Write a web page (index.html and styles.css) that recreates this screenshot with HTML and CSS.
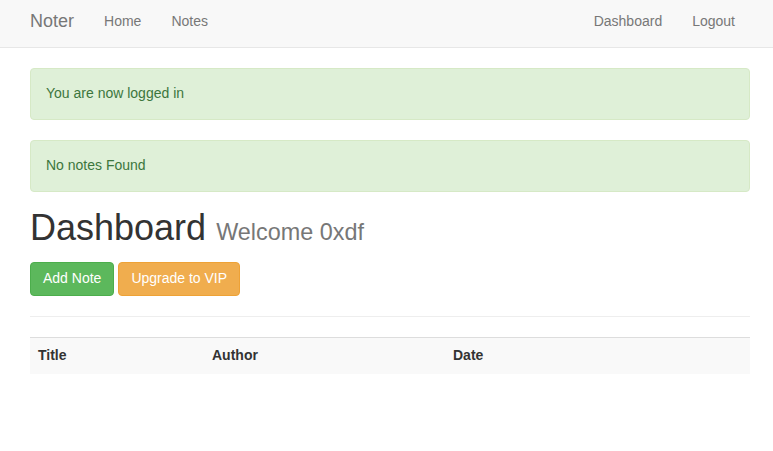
FILE: index.html
```html
<!DOCTYPE html>
<html>
<head>
<meta charset="utf-8">
<title>Noter</title>
<link rel="stylesheet" href="styles.css">
</head>
<body>
<nav class="navbar">
  <div class="nav-inner">
    <a class="brand" href="#">Noter</a>
    <ul class="nav-links">
      <li><a href="#">Home</a></li>
      <li><a href="#">Notes</a></li>
    </ul>
    <ul class="nav-links nav-right">
      <li><a href="#">Dashboard</a></li>
      <li><a href="#">Logout</a></li>
    </ul>
  </div>
</nav>
<main class="container">
  <div class="alert">You are now logged in</div>
  <div class="alert">No notes Found</div>
  <h1 class="title">Dashboard <small>Welcome 0xdf</small></h1>
  <div class="actions">
    <a class="btn btn-success" href="#">Add Note</a>
    <a class="btn btn-warning" href="#">Upgrade to VIP</a>
  </div>
  <hr class="rule">
  <table class="table">
    <tr class="head-row">
      <th class="col-title">Title</th>
      <th class="col-author">Author</th>
      <th>Date</th>
    </tr>
  </table>
</main>
</body>
</html>
```
FILE: styles.css
```css
* { box-sizing: border-box; }
html, body { margin: 0; padding: 0; }
body {
  font-family: "Liberation Sans", Arial, Helvetica, sans-serif;
  font-size: 14px;
  line-height: 20px;
  color: #333;
  background: #fff;
}
a { text-decoration: none; }

.navbar {
  height: 48px;
  background: #f8f8f8;
  border-bottom: 1px solid #e7e7e7;
}
.nav-inner {
  display: flex;
  align-items: flex-start;
  height: 47px;
  padding-left: 30px;
  padding-top: 11px;
  width: 750px;
}
.brand {
  font-size: 18px;
  line-height: 20px;
  color: #777;
  padding-right: 15px;
}
.nav-links {
  display: flex;
  list-style: none;
  margin: 0;
  padding: 0;
}
.nav-links a {
  display: block;
  padding: 0 15px;
  color: #777;
  line-height: 20px;
}
.nav-right { margin-left: auto; }

.container {
  width: 720px;
  margin-left: 30px;
  padding-top: 20px;
}
.alert {
  padding: 14px 15px 16px;
  border: 1px solid #d6e9c6;
  border-radius: 4px;
  background: #dff0d8;
  color: #3c763d;
  margin-bottom: 20px;
}
.title {
  font-size: 36px;
  font-weight: 500;
  line-height: 39.6px;
  margin: -4px 0 0;
  color: #333;
}
.title small {
  font-size: 23.4px;
  font-weight: 400;
  color: #777;
}
.actions {
  margin-top: 9px;
  display: flex;
  gap: 4px;
}
.btn {
  display: inline-block;
  padding: 5px 12px 7px;
  font-size: 14px;
  line-height: 20px;
  border: 1px solid transparent;
  border-radius: 4px;
  color: #fff;
}
.btn-success { background: #5cb85c; border-color: #4cae4c; }
.btn-warning { background: #f0ad4e; border-color: #eea236; }

.rule {
  margin: 20px 0;
  border: 0;
  border-top: 1px solid #eee;
}
.table {
  width: 100%;
  border-collapse: collapse;
  border-spacing: 0;
}
.head-row { background: #f9f9f9; }
.table th {
  text-align: left;
  font-weight: bold;
  padding: 7px 8px 9px;
  line-height: 20px;
  border-top: 1px solid #ddd;
}
.col-title { width: 174px; }
.col-author { width: 241px; }
```
